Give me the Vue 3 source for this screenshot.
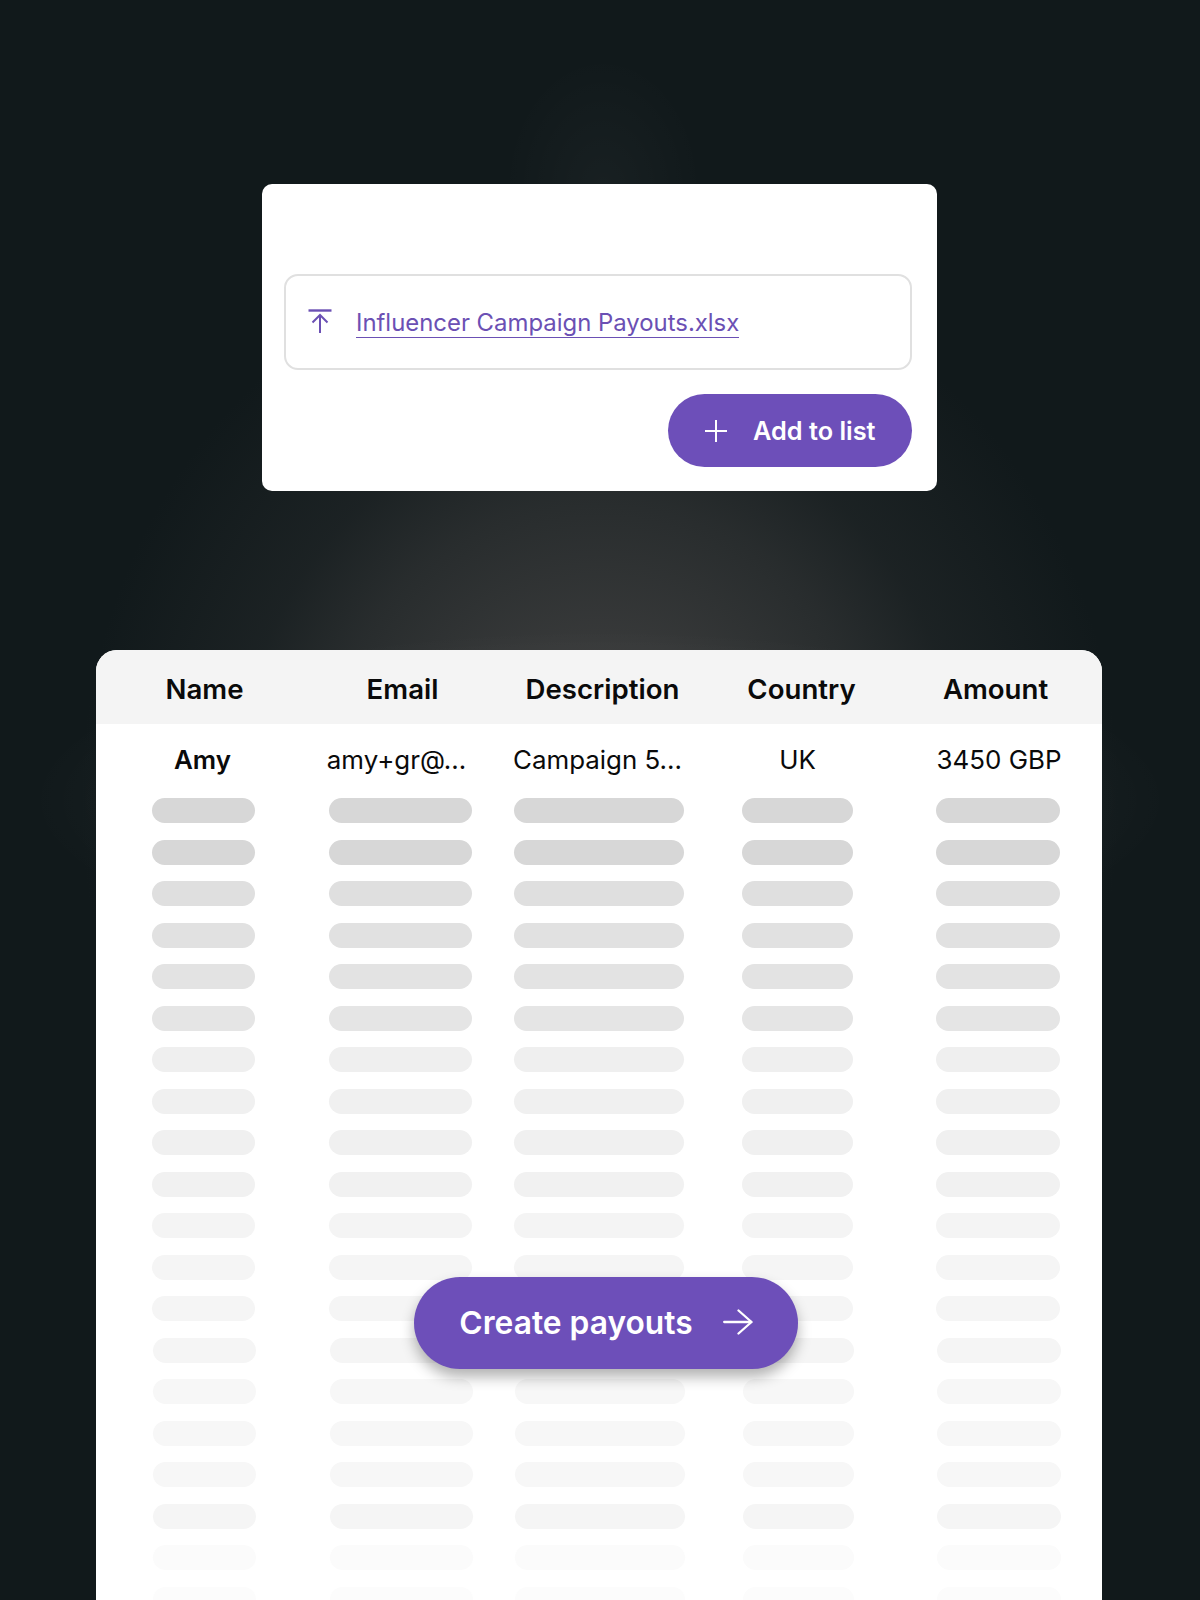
<script setup>
const cols = [
  { key: 'name', title: 'Name', value: 'Amy', pill: 103, shift: 0, head: 1, val: -1 },
  { key: 'email', title: 'Email', value: 'amy+gr@...', pill: 143, shift: 0, head: 2, val: -4 },
  { key: 'desc', title: 'Description', value: 'Campaign 5...', pill: 170, shift: 0, head: 3.5, val: -1.5 },
  { key: 'country', title: 'Country', value: 'UK', pill: 111, shift: 0, head: 4, val: 0 },
  { key: 'amount', title: 'Amount', value: '3450 GBP', pill: 124, shift: 7, head: -2.5, val: 1 }
]
const shades = ['#d7d7d7', '#d7d7d7', '#dfdfdf', '#e1e1e1', '#e3e3e3', '#e5e5e5', '#efefef', '#f0f0f0', '#f0f0f0', '#f1f1f1', '#f4f4f4', '#f5f5f5', '#f5f5f5', '#f5f5f5', '#f7f7f7', '#f7f7f7', '#f7f7f7', '#f5f5f5', '#fbfbfb', '#fcfcfc']
</script>

<template>
  <div class="page">
    <section class="upload-card">
      <div class="file-box">
        <svg class="upload-icon" viewBox="0 0 24 24" width="24" height="24" fill="none" stroke="currentColor" stroke-width="2" aria-hidden="true">
          <path d="M0.500 1.500h23" stroke-width="2.400" />
          <path d="M12 24V6.500" />
          <path d="M4.500 13.500 12 6l7.500 7.500" />
        </svg>
        <span class="file-name">Influencer Campaign Payouts.xlsx</span>
      </div>
      <div class="card-actions">
        <button class="add-btn" type="button">
          <svg viewBox="0 0 22 22" width="22" height="22" fill="none" stroke="currentColor" stroke-width="2" aria-hidden="true">
            <path d="M11 0v22M0 11h22" />
          </svg>
          <span>Add to list</span>
        </button>
      </div>
    </section>

    <section class="table-card">
      <div class="grid head">
        <div v-for="c in cols" :key="c.key" class="cell" :style="{ paddingLeft: c.shift + c.head * 2 + 'px' }">{{ c.title }}</div>
      </div>
      <div class="grid value-row">
        <div
          v-for="(c, i) in cols"
          :key="c.key"
          class="cell"
          :class="{ strong: i === 0 }"
          :style="{ paddingLeft: Math.max(c.shift + c.val * 2, 0) + 'px', paddingRight: Math.max(-(c.shift + c.val * 2), 0) + 'px' }"
        >{{ c.value }}</div>
      </div>
      <div class="skeleton">
        <div v-for="(shade, r) in shades" :key="r" class="grid skeleton-row">
          <div v-for="c in cols" :key="c.key" class="cell" :style="{ paddingLeft: c.shift + (r >= 13 ? 2 : 0) + 'px' }">
            <span class="pill" :style="{ width: c.pill + 'px', background: shade }"></span>
          </div>
        </div>
      </div>
      <button class="create-btn" type="button">
        <span>Create payouts</span>
        <svg viewBox="0 0 30 26" width="30" height="26" fill="none" stroke="currentColor" stroke-width="2.300" stroke-linecap="round" stroke-linejoin="round" aria-hidden="true">
          <path d="M1.200 13h27" />
          <path d="M15.500 1.500 28.500 13 15.500 24.500" />
        </svg>
      </button>
    </section>
  </div>
</template>

<style scoped>
.page {
  position: relative;
  box-sizing: border-box;
  width: 1200px;
  height: 1600px;
  padding-top: 184px;
  overflow: hidden;
  display: flex;
  flex-direction: column;
  font-family: Inter, "Liberation Sans", sans-serif;
  background:
    radial-gradient(ellipse 100px 135px at 603px 190px, rgba(255, 255, 255, 0.03) 0%, rgba(255, 255, 255, 0) 100%),
    radial-gradient(ellipse 570px 170px at 600px 800px, rgba(255, 255, 255, 0.035) 0%, rgba(255, 255, 255, 0.028) 75%, rgba(255, 255, 255, 0) 100%),
    radial-gradient(ellipse 520px 560px at 600px 800px, rgba(66, 66, 66, 1) 0%, rgba(66, 66, 66, 0.78) 28%, rgba(66, 66, 66, 0.47) 54%, rgba(66, 66, 66, 0.22) 70%, rgba(66, 66, 66, 0) 100%),
    #11191b;
}
.upload-card {
  box-sizing: border-box;
  width: 675px;
  height: 307px;
  margin-left: 262px;
  padding: 90px 25px 24px 21.500px;
  background: #fff;
  border-radius: 10px;
}
.file-box {
  box-sizing: border-box;
  height: 96px;
  display: flex;
  align-items: center;
  gap: 24px;
  padding-left: 22.500px;
  border: 2px solid #e0e0e0;
  border-radius: 14px;
  color: #6b50b4;
}
.upload-icon {
  flex: none;
  margin-top: -3px;
}
.file-name {
  padding-top: 2px;
  font-size: 23.900px;
  line-height: 29px;
  border-bottom: 1.500px solid #6b50b4;
}
.card-actions {
  display: flex;
  justify-content: flex-end;
  margin-top: 24px;
}
.add-btn {
  display: flex;
  align-items: center;
  gap: 26px;
  width: 244px;
  height: 73px;
  padding: 0 0 0 37px;
  border: 0;
  border-radius: 37px;
  background: #6d4fb9;
  color: #fff;
  font: 600 25.300px Inter, "Liberation Sans", sans-serif;
}
.table-card {
  flex: 1;
  width: 1006px;
  margin: 159px 0 0 96px;
  background: #fff;
  border-radius: 21px 21px 0 0;
  overflow: hidden;
  color: #0a0a0a;
}
.grid {
  display: grid;
  grid-template-columns: 215px 179px 218px 179px 215px;
}
.cell {
  box-sizing: border-box;
  display: flex;
  justify-content: center;
  align-items: center;
  white-space: nowrap;
}
.head {
  box-sizing: border-box;
  height: 74px;
  padding-top: 4px;
  background: #f4f4f4;
  font-size: 27.600px;
  font-weight: 600;
}
.value-row {
  box-sizing: border-box;
  height: 74px;
  padding-bottom: 4px;
  font-size: 25.900px;
}
.strong {
  font-weight: 600;
}
.skeleton {
  display: flex;
  flex-direction: column;
  gap: 16.530px;
}
.pill {
  display: block;
  height: 25px;
  border-radius: 13px;
}
.create-btn {
  position: absolute;
  left: 414px;
  top: 1277px;
  width: 384px;
  height: 92px;
  display: flex;
  align-items: center;
  justify-content: center;
  gap: 30px;
  padding: 0 0 2px;
  border: 0;
  border-radius: 46px;
  background: #6d4fb9;
  color: #fff;
  font: 600 31.750px Inter, "Liberation Sans", sans-serif;
  box-shadow: 0 8px 14px rgba(0, 0, 0, 0.3);
}
</style>
